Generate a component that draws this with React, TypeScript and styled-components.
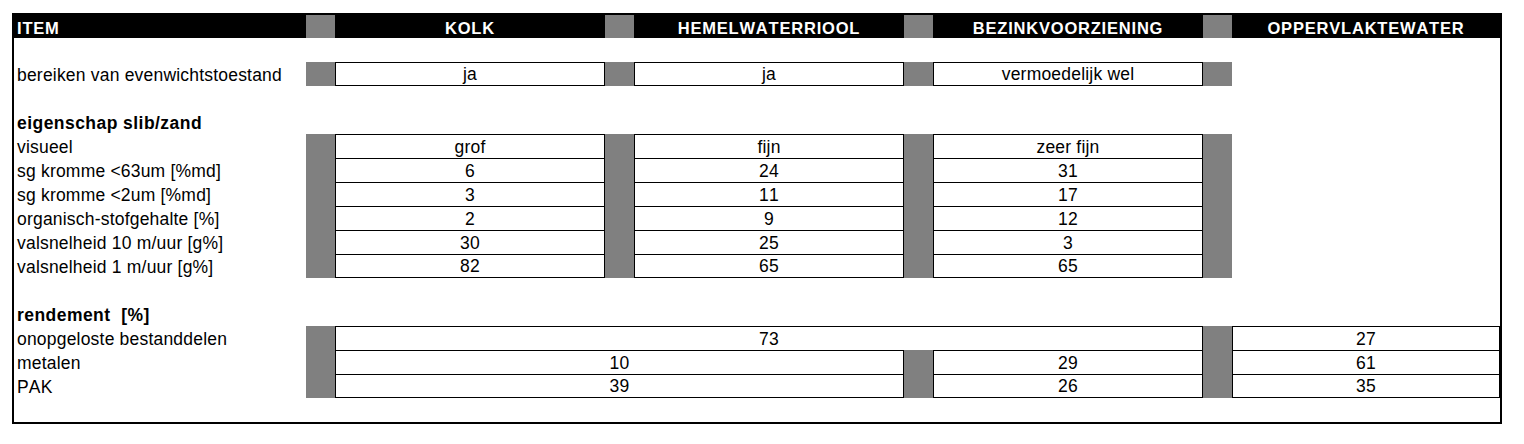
import React from 'react'
import styled, { createGlobalStyle } from 'styled-components'

const GlobalStyle = createGlobalStyle`
  html, body {
    margin: 0;
    padding: 0;
    background: #fff;
  }
  body {
    font-family: "Liberation Sans", Arial, sans-serif;
    color: #000;
    font-kerning: none;
  }
  * {
    box-sizing: border-box;
  }
`

const COLUMNS = '292px 29px 270px 29px 270px 29px 270px 29px 268px'

const Page = styled.main`
  padding: 13px 0 0 12px;
`

const Sheet = styled.section`
  width: 1490px;
  border: 2px solid #000;
`

const Row = styled.div<{ $head?: boolean }>`
  display: grid;
  grid-template-columns: ${COLUMNS};
  height: ${(p) => (p.$head ? 23 : 24)}px;
  background: ${(p) => (p.$head ? '#000' : 'transparent')};
`

const Label = styled.div<{ $bold?: boolean }>`
  display: flex;
  align-items: flex-end;
  padding: 0 0 1px 3px;
  font-size: 17.5px;
  line-height: 19px;
  letter-spacing: ${(p) => (p.$bold ? 0.45 : 0.2)}px;
  font-weight: ${(p) => (p.$bold ? 700 : 400)};
  white-space: pre;
`

const HeadCell = styled.div<{ $left?: boolean }>`
  display: flex;
  align-items: flex-end;
  justify-content: ${(p) => (p.$left ? 'flex-start' : 'center')};
  padding: 0 0 1px ${(p) => (p.$left ? 3 : 0)}px;
  color: #fff;
  font-size: 16.5px;
  line-height: 18px;
  font-weight: 700;
  letter-spacing: 0.8px;
`

const Shade = styled.div<{ $on?: boolean }>`
  background: ${(p) => (p.$on ? '#808080' : 'transparent')};
`

const Value = styled.div<{ $span?: number; $last?: boolean }>`
  grid-column: span ${(p) => p.$span ?? 1};
  display: flex;
  align-items: flex-end;
  justify-content: center;
  padding-bottom: 1px;
  border: 1px solid #000;
  border-bottom-width: ${(p) => (p.$last ? 1 : 0)}px;
  font-size: 17.5px;
  line-height: 19px;
  letter-spacing: 0.2px;
`

const Empty = styled.div<{ $span?: number }>`
  grid-column: span ${(p) => p.$span ?? 1};
`

const heads = ['KOLK', 'HEMELWATERRIOOL', 'BEZINKVOORZIENING', 'OPPERVLAKTEWATER']

const properties: [string, string, string, string][] = [
  ['visueel', 'grof', 'fijn', 'zeer fijn'],
  ['sg kromme <63um [%md]', '6', '24', '31'],
  ['sg kromme <2um [%md]', '3', '11', '17'],
  ['organisch-stofgehalte [%]', '2', '9', '12'],
  ['valsnelheid 10 m/uur [g%]', '30', '25', '3'],
  ['valsnelheid 1 m/uur [g%]', '82', '65', '65'],
]

const split: [string, string, string, string][] = [
  ['metalen', '10', '29', '61'],
  ['PAK', '39', '26', '35'],
]

const Blank = () => <Row />

const Section = ({ title }: { title: string }) => (
  <Row>
    <Label $bold>{title}</Label>
  </Row>
)

const App = () => {
  return (
    <>
      <GlobalStyle />
      <Page>
        <Sheet>
          <Row $head>
            <HeadCell $left>ITEM</HeadCell>
            {heads.map((h) => (
              <React.Fragment key={h}>
                <Shade $on />
                <HeadCell>{h}</HeadCell>
              </React.Fragment>
            ))}
          </Row>

          <Blank />
          <Row>
            <Label>bereiken van evenwichtstoestand</Label>
            <Shade $on />
            <Value $last>ja</Value>
            <Shade $on />
            <Value $last>ja</Value>
            <Shade $on />
            <Value $last>vermoedelijk wel</Value>
            <Shade $on />
            <Empty />
          </Row>
          <Blank />

          <Section title="eigenschap slib/zand" />
          {properties.map(([label, a, b, c], i) => {
            const last = i === properties.length - 1
            return (
              <Row key={label}>
                <Label>{label}</Label>
                <Shade $on />
                <Value $last={last}>{a}</Value>
                <Shade $on />
                <Value $last={last}>{b}</Value>
                <Shade $on />
                <Value $last={last}>{c}</Value>
                <Shade $on />
                <Empty />
              </Row>
            )
          })}
          <Blank />

          <Section title="rendement  [%]" />
          <Row>
            <Label>onopgeloste bestanddelen</Label>
            <Shade $on />
            <Value $span={5}>73</Value>
            <Shade $on />
            <Value>27</Value>
          </Row>
          {split.map(([label, a, b, c], i) => {
            const last = i === split.length - 1
            return (
              <Row key={label}>
                <Label>{label}</Label>
                <Shade $on />
                <Value $span={3} $last={last}>{a}</Value>
                <Shade $on />
                <Value $last={last}>{b}</Value>
                <Shade $on />
                <Value $last={last}>{c}</Value>
              </Row>
            )
          })}
          <Blank />
        </Sheet>
      </Page>
    </>
  )
}

export default App
